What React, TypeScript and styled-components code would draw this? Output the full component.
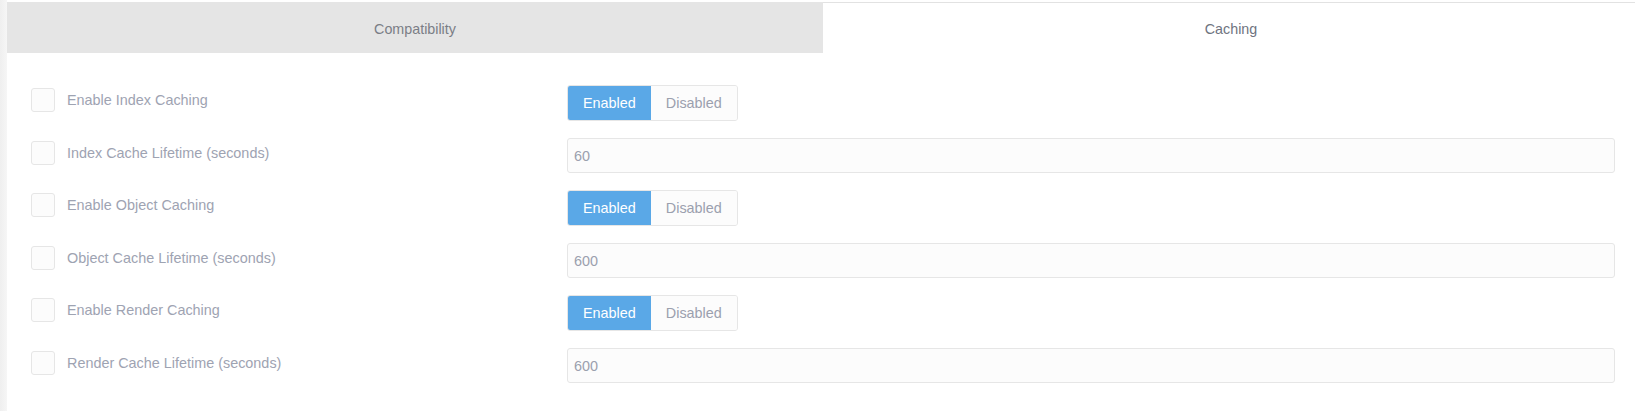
import styled, { createGlobalStyle } from 'styled-components'

const GlobalStyle = createGlobalStyle`
  html, body {
    margin: 0;
    padding: 0;
    background: #ffffff;
    overflow-x: hidden;
  }
  body {
    font-family: "Liberation Sans", Arial, Helvetica, sans-serif;
  }
`

const Page = styled.div`
  display: flex;
  min-height: 411px;
`

const SideStrip = styled.div`
  width: 7px;
  flex-shrink: 0;
  background: linear-gradient(to right, #efefef, #f6f6f6);
`

const Main = styled.div`
  flex: 1;
  padding-top: 2px;
  min-width: 0;
`

const TabBar = styled.div`
  display: grid;
  grid-template-columns: 1fr 1fr;
  width: 1632px;
`

const Tab = styled.div<{ $active?: boolean }>`
  height: 51px;
  display: flex;
  align-items: center;
  justify-content: center;
  box-sizing: border-box;
  font-size: 14.3px;
  color: ${({ $active }) => ($active ? '#6f7480' : '#7b7e86')};
  background: ${({ $active }) => ($active ? '#ffffff' : '#e5e5e5')};
  border-top: 1px solid ${({ $active }) => ($active ? '#e2e2e2' : '#e5e5e5')};
  padding-top: 1px;
`

const Panel = styled.div`
  display: flex;
  flex-direction: column;
  gap: 16.5px;
  padding: 32px 20px 24px 0;
`

const Row = styled.div`
  display: grid;
  grid-template-columns: 560px 1fr;
  min-height: 36px;
`

const LabelCell = styled.label`
  display: flex;
  align-items: center;
  gap: 12px;
  padding: 3px 0 0 24px;
  align-self: start;
`

const Box = styled.span`
  width: 24px;
  height: 24px;
  box-sizing: border-box;
  border: 1px solid #e6e6e6;
  border-radius: 3px;
  background: #fcfcfc;
  flex-shrink: 0;
`

const LabelText = styled.span`
  font-size: 14.4px;
  line-height: 24px;
  color: #9ea3b2;
`

const Toggle = styled.div`
  display: inline-flex;
  height: 36px;
  box-sizing: border-box;
  border: 1px solid #e6e6e6;
  border-radius: 3px;
  overflow: hidden;
  justify-self: start;
  background: #fcfcfc;
`

const ToggleButton = styled.button<{ $on?: boolean }>`
  border: none;
  margin: 0;
  padding: 0 15px;
  font-family: inherit;
  font-size: 14.4px;
  cursor: pointer;
  background: ${({ $on }) => ($on ? '#5aa8e7' : '#fcfcfc')};
  color: ${({ $on }) => ($on ? '#ffffff' : '#9ba0ae')};
  margin-top: ${({ $on }) => ($on ? '-1px' : '0')};
  margin-bottom: ${({ $on }) => ($on ? '-1px' : '0')};
  margin-left: ${({ $on }) => ($on ? '-1px' : '0')};
  padding-left: ${({ $on }) => ($on ? '16px' : '15px')};
`

const TextInput = styled.input`
  height: 35px;
  margin-top: 0.5px;
  box-sizing: border-box;
  width: 100%;
  border: 1px solid #e6e6e6;
  border-radius: 3px;
  background: #fcfcfc;
  padding: 0 6px;
  font-family: inherit;
  font-size: 14.4px;
  color: #9ba0ae;
  outline: none;
`

type Setting =
  | { label: string; kind: 'toggle'; enabled: boolean }
  | { label: string; kind: 'number'; value: string }

const settings: Setting[] = [
  { label: 'Enable Index Caching', kind: 'toggle', enabled: true },
  { label: 'Index Cache Lifetime (seconds)', kind: 'number', value: '60' },
  { label: 'Enable Object Caching', kind: 'toggle', enabled: true },
  { label: 'Object Cache Lifetime (seconds)', kind: 'number', value: '600' },
  { label: 'Enable Render Caching', kind: 'toggle', enabled: true },
  { label: 'Render Cache Lifetime (seconds)', kind: 'number', value: '600' },
]

export default function App() {
  return (
    <>
      <GlobalStyle />
      <Page>
        <SideStrip />
        <Main>
          <TabBar>
            <Tab>Compatibility</Tab>
            <Tab $active>Caching</Tab>
          </TabBar>
          <Panel>
            {settings.map((s) => (
              <Row key={s.label}>
                <LabelCell>
                  <Box />
                  <LabelText>{s.label}</LabelText>
                </LabelCell>
                {s.kind === 'toggle' ? (
                  <Toggle>
                    <ToggleButton $on={s.enabled}>Enabled</ToggleButton>
                    <ToggleButton $on={!s.enabled}>Disabled</ToggleButton>
                  </Toggle>
                ) : (
                  <TextInput defaultValue={s.value} />
                )}
              </Row>
            ))}
          </Panel>
        </Main>
      </Page>
    </>
  )
}
